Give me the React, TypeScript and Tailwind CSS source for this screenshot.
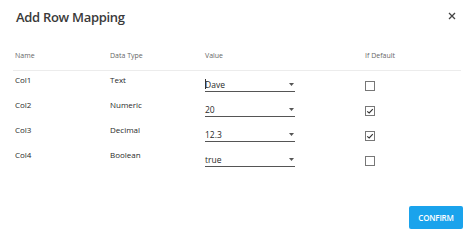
import React from "react";

const rows = [
  { name: "Col1", type: "Text", value: "Dave", checked: false, cursor: true },
  { name: "Col2", type: "Numeric", value: "20", checked: true },
  { name: "Col3", type: "Decimal", value: "12.3", checked: true },
  { name: "Col4", type: "Boolean", value: "true", checked: false },
];

export default function App() {
  return (
    <div
      className="w-[474px] h-[240px] bg-white text-[#333] relative overflow-hidden"
      style={{ fontFamily: '"Open Sans", "Noto Sans", sans-serif' }}
    >
      <div className="flex items-center justify-between pl-[16px] pr-[18px] pt-[6px] h-[28px]">
        <div className="text-[13px] font-semibold leading-[20px] text-[#3a3a3a] tracking-[-0.3px]">
          Add Row Mapping
        </div>
        <svg width="8" height="8" viewBox="0 0 8 8" className="mt-[-2px]">
          <path d="M1 1L7 7M7 1L1 7" stroke="#444" strokeWidth="1.3" />
        </svg>
      </div>

      <div className="mt-[23px] mx-[13px]">
        <div className="grid grid-cols-[95px_95px_160px_1fr] pl-[2px] h-[20px] items-start text-[7px] leading-[10px] text-[#666] border-b border-[#ececec]">
          <div>Name</div>
          <div>Data Type</div>
          <div>Value</div>
          <div>If Default</div>
        </div>
        {rows.map((r) => (
          <div
            key={r.name}
            className="grid grid-cols-[95px_95px_160px_1fr] pl-[2px] h-[25px] items-start text-[8px] leading-[10px] text-[#2a2a2a]"
          >
            <div className="mt-[4px]">{r.name}</div>
            <div className="mt-[4px]">{r.type}</div>
            <div className="mt-[5px] w-[90px] h-[16px] border-b border-[#555] flex items-center justify-between pr-[1px]">
              <span className="text-[8.5px] leading-[10px] pt-[3px] relative">
                {r.cursor && (
                  <span className="absolute left-0 top-[2px] w-[0.8px] h-[10px] bg-[#333]" />
                )}
                {r.value}
              </span>
              <svg width="5" height="3" viewBox="0 0 5 3" className="mt-[1px]">
                <path d="M0 0H5L2.5 3Z" fill="#555" />
              </svg>
            </div>
            <div className="mt-[10px]">
              <div className="w-[10px] h-[10px] border border-[#777] bg-white flex items-center justify-center">
                {r.checked && (
                  <svg width="8" height="8" viewBox="0 0 8 8">
                    <path d="M1.2 4.3L3.2 6L6.8 2.2" stroke="#333" strokeWidth="1.1" fill="none" />
                  </svg>
                )}
              </div>
            </div>
          </div>
        ))}
      </div>

      <div className="flex justify-end pr-[11px] mt-[35px]">
        <button className="w-[54px] h-[23px] rounded-[2px] bg-[#1aa3ec] text-white text-[8px] font-semibold tracking-[-0.2px]">
          CONFIRM
        </button>
      </div>
    </div>
  );
}
